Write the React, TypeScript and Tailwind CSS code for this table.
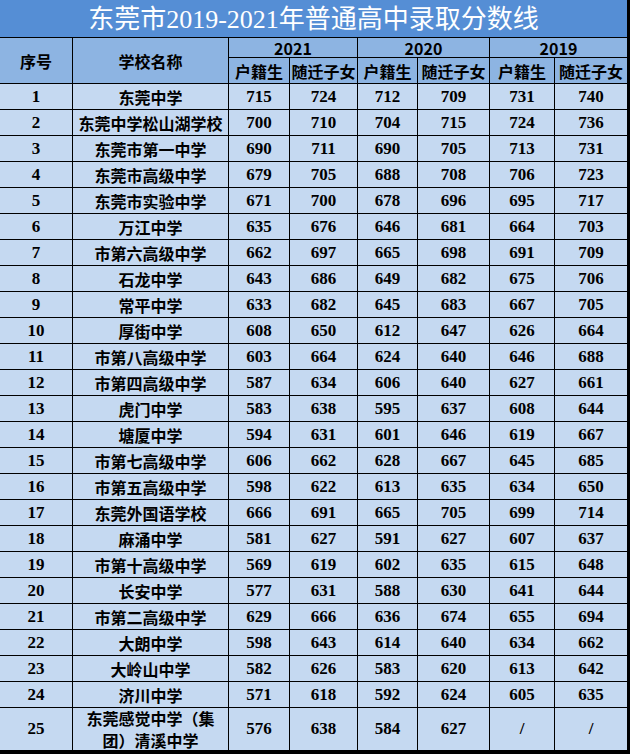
const rows: [string, string, ...string[]][] = [
  ['1', '东莞中学', '715', '724', '712', '709', '731', '740'],
  ['2', '东莞中学松山湖学校', '700', '710', '704', '715', '724', '736'],
  ['3', '东莞市第一中学', '690', '711', '690', '705', '713', '731'],
  ['4', '东莞市高级中学', '679', '705', '688', '708', '706', '723'],
  ['5', '东莞市实验中学', '671', '700', '678', '696', '695', '717'],
  ['6', '万江中学', '635', '676', '646', '681', '664', '703'],
  ['7', '市第六高级中学', '662', '697', '665', '698', '691', '709'],
  ['8', '石龙中学', '643', '686', '649', '682', '675', '706'],
  ['9', '常平中学', '633', '682', '645', '683', '667', '705'],
  ['10', '厚街中学', '608', '650', '612', '647', '626', '664'],
  ['11', '市第八高级中学', '603', '664', '624', '640', '646', '688'],
  ['12', '市第四高级中学', '587', '634', '606', '640', '627', '661'],
  ['13', '虎门中学', '583', '638', '595', '637', '608', '644'],
  ['14', '塘厦中学', '594', '631', '601', '646', '619', '667'],
  ['15', '市第七高级中学', '606', '662', '628', '667', '645', '685'],
  ['16', '市第五高级中学', '598', '622', '613', '635', '634', '650'],
  ['17', '东莞外国语学校', '666', '691', '665', '705', '699', '714'],
  ['18', '麻涌中学', '581', '627', '591', '627', '607', '637'],
  ['19', '市第十高级中学', '569', '619', '602', '635', '615', '648'],
  ['20', '长安中学', '577', '631', '588', '630', '641', '644'],
  ['21', '市第二高级中学', '629', '666', '636', '674', '655', '694'],
  ['22', '大朗中学', '598', '643', '614', '640', '634', '662'],
  ['23', '大岭山中学', '582', '626', '583', '620', '613', '642'],
  ['24', '济川中学', '571', '618', '592', '624', '605', '635'],
];

const cjk = "font-['Noto_Sans_CJK_SC',sans-serif]";
const num = "font-['Liberation_Serif','Noto_Sans_CJK_SC',serif]";

function Cell({ children, className = '' }: { children: React.ReactNode; className?: string }) {
  return (
    <div className={`flex items-center justify-center bg-[#c5d9f1] text-[16px] font-bold text-black ${className}`}>
      {children}
    </div>
  );
}

function Head({ children, className = '' }: { children: React.ReactNode; className?: string }) {
  return (
    <div className={`flex items-center justify-center bg-[#8db4e2] text-[16px] font-bold text-black ${cjk} ${className}`}>
      {children}
    </div>
  );
}

export default function App() {
  return (
    <div className="w-[630px] h-[754px] bg-black">
      <div className="grid w-[627px] gap-px bg-black grid-cols-[72px_155px_60px_67px_59px_71px_64px_72px] grid-rows-[37px_19px_25px_repeat(24,25px)_42px]">
        {/* title */}
        <div className="col-span-8 flex items-center justify-center bg-[#558ed5] text-white text-[26px] font-['Liberation_Serif','Noto_Sans_CJK_SC',serif] pt-[1px]">
          东莞市2019-2021年普通高中录取分数线
        </div>

        <Head className="row-span-2">序号</Head>
        <Head className="row-span-2">学校名称</Head>
        <Head className={`col-span-2 ${num}`}>2021</Head>
        <Head className={`col-span-2 ${num}`}>2020</Head>
        <Head className={`col-span-2 ${num}`}>2019</Head>
        <Head>户籍生</Head>
        <Head>随迁子女</Head>
        <Head>户籍生</Head>
        <Head>随迁子女</Head>
        <Head>户籍生</Head>
        <Head>随迁子女</Head>

        {rows.map(([no, name, ...scores]) => (
          <div key={no} className="contents">
            <Cell className={`${num} text-[17px]`}>{no}</Cell>
            <Cell className={cjk}>{name}</Cell>
            {scores.map((s, i) => (
              <Cell key={i} className={`${num} text-[17px]`}>{s}</Cell>
            ))}
          </div>
        ))}

        <Cell className={`${num} text-[17px]`}>25</Cell>
        <Cell className={`${cjk} flex-col leading-[22px]`}>
          <span>东莞感觉中学（集</span>
          <span>团）清溪中学</span>
        </Cell>
        <Cell className={`${num} text-[17px]`}>576</Cell>
        <Cell className={`${num} text-[17px]`}>638</Cell>
        <Cell className={`${num} text-[17px]`}>584</Cell>
        <Cell className={`${num} text-[17px]`}>627</Cell>
        <Cell className={`${num} text-[17px]`}>/</Cell>
        <Cell className={`${num} text-[17px]`}>/</Cell>
      </div>
    </div>
  );
}
